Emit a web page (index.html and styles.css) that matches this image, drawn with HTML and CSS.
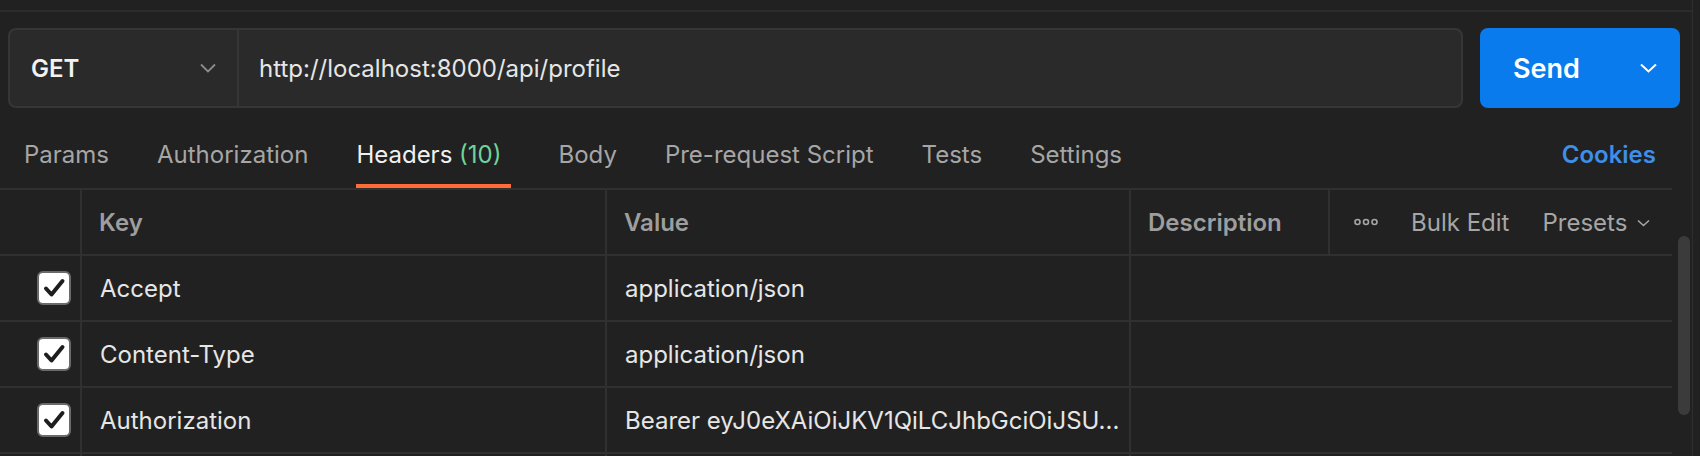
FILE: index.html
```html
<!DOCTYPE html>
<html lang="en">
<head>
<meta charset="utf-8">
<title>Request</title>
<link rel="stylesheet" href="styles.css">
</head>
<body>
<div class="app">
  <div class="main">
    <div class="topbar"></div>
    <div class="request">
      <div class="urlbox">
        <div class="method">
          <span class="method-name">GET</span>
          <svg class="chev" width="16" height="10" viewBox="0 0 16 10"><polyline points="1,1.5 8,8.5 15,1.5" fill="none" stroke="#8c8c8c" stroke-width="1.8"/></svg>
        </div>
        <div class="url">http://localhost:8000/api/profile</div>
      </div>
      <div class="send">
        <span class="send-label">Send</span>
        <svg class="chev" width="17" height="10" viewBox="0 0 17 10"><polyline points="1,1.5 8.5,8.5 16,1.5" fill="none" stroke="#ffffff" stroke-width="2"/></svg>
      </div>
    </div>
    <div class="tabs">
      <div class="tab">Params</div>
      <div class="tab">Authorization</div>
      <div class="tab active">Headers <span class="count">(10)</span></div>
      <div class="tab">Body</div>
      <div class="tab">Pre-request Script</div>
      <div class="tab">Tests</div>
      <div class="tab">Settings</div>
      <div class="cookies">Cookies</div>
    </div>
    <div class="tablewrap">
      <div class="table">
        <div class="row head">
          <div class="cell check"></div>
          <div class="cell">Key</div>
          <div class="cell">Value</div>
          <div class="cell">Description</div>
          <div class="cell actions">
            <svg class="dots" width="24" height="8" viewBox="0 0 24 8"><circle cx="3.5" cy="4" r="2.5" fill="none" stroke="#a6a6a6" stroke-width="1.6"/><circle cx="12" cy="4" r="2.5" fill="none" stroke="#a6a6a6" stroke-width="1.6"/><circle cx="20.5" cy="4" r="2.5" fill="none" stroke="#a6a6a6" stroke-width="1.6"/></svg>
            <span class="bulk">Bulk Edit</span>
            <span class="presets">Presets <svg class="pchev" width="13" height="8" viewBox="0 0 13 8"><polyline points="1,1.5 6.5,6.5 12,1.5" fill="none" stroke="#a6a6a6" stroke-width="1.6"/></svg></span>
          </div>
        </div>
        <div class="row">
          <div class="cell check"><span class="box"><svg width="30" height="30" viewBox="0 0 30 30"><polyline points="7,15.5 12.5,21.5 23.5,8" fill="none" stroke="#1e1e1e" stroke-width="4" stroke-linecap="round" stroke-linejoin="round"/></svg></span></div>
          <div class="cell">Accept</div>
          <div class="cell">application/json</div>
          <div class="cell wide"></div>
        </div>
        <div class="row">
          <div class="cell check"><span class="box"><svg width="30" height="30" viewBox="0 0 30 30"><polyline points="7,15.5 12.5,21.5 23.5,8" fill="none" stroke="#1e1e1e" stroke-width="4" stroke-linecap="round" stroke-linejoin="round"/></svg></span></div>
          <div class="cell">Content-Type</div>
          <div class="cell">application/json</div>
          <div class="cell wide"></div>
        </div>
        <div class="row">
          <div class="cell check"><span class="box"><svg width="30" height="30" viewBox="0 0 30 30"><polyline points="7,15.5 12.5,21.5 23.5,8" fill="none" stroke="#1e1e1e" stroke-width="4" stroke-linecap="round" stroke-linejoin="round"/></svg></span></div>
          <div class="cell">Authorization</div>
          <div class="cell">Bearer eyJ0eXAiOiJKV1QiLCJhbGciOiJSU...</div>
          <div class="cell wide"></div>
        </div>
        <div class="row">
          <div class="cell check"></div>
          <div class="cell"></div>
          <div class="cell"></div>
          <div class="cell wide"></div>
        </div>
      </div>
      <div class="gutter"><div class="thumb"></div></div>
    </div>
  </div>
  <div class="edge"></div>
</div>
</body>
</html>
```
FILE: styles.css
```css
html, body {
  margin: 0;
  padding: 0;
  background: #212121;
  height: 456px;
  overflow: hidden;
}
body {
  font-family: Inter, "Noto Sans", "Liberation Sans", sans-serif;
  color: #e6e6e6;
}
.app {
  display: flex;
  width: 1700px;
  height: 456px;
  overflow: hidden;
}
.main {
  width: 1692px;
  flex-shrink: 0;
  display: flex;
  flex-direction: column;
}
.main > * {
  flex-shrink: 0;
}
.edge {
  width: 1px;
  flex-shrink: 0;
  background: #2e2e2e;
}
.topbar {
  height: 10px;
  border-bottom: 2px solid #2c2c2c;
}
.request {
  display: flex;
  gap: 17px;
  padding: 16px 12px 0 8px;
}
.urlbox {
  flex: 1;
  height: 80px;
  box-sizing: border-box;
  display: flex;
  background: #2a2a2a;
  border: 2px solid #363636;
  border-radius: 8px;
}
.method {
  width: 229px;
  box-sizing: border-box;
  display: flex;
  align-items: center;
  justify-content: space-between;
  padding: 0 21px 0 21px;
  border-right: 2px solid #363636;
}
.method-name {
  font-size: 24px;
  font-weight: 600;
  color: #f2f2f2;
}
.url {
  display: flex;
  align-items: center;
  padding-left: 20px;
  font-size: 24px;
  color: #e6e6e6;
}
.send {
  width: 200px;
  height: 80px;
  box-sizing: border-box;
  background: #097bed;
  border-radius: 8px;
  display: flex;
  align-items: center;
  justify-content: space-between;
  padding: 0 23px 0 33px;
}
.send-label {
  font-size: 27px;
  font-weight: 600;
  color: #ffffff;
}
.tabs {
  display: flex;
  align-items: flex-start;
  gap: 48px;
  padding: 0 36px 0 24px;
  height: 80px;
  box-sizing: border-box;
}
.tab {
  font-size: 24px;
  line-height: 30px;
  color: #a6a6a6;
  padding: 32px 0 14px 0;
  border-bottom: 4px solid transparent;
  white-space: nowrap;
}
.tab.active {
  color: #f0f0f0;
  border-bottom-color: #ff6c37;
  padding-right: 9px;
}
.count {
  color: #6fd39c;
}
.cookies {
  margin-left: auto;
  font-size: 24px;
  line-height: 30px;
  font-weight: 600;
  color: #3d8fe8;
  padding-top: 32px;
}
.tablewrap {
  display: flex;
}
.table {
  width: 1672px;
  flex-shrink: 0;
  border-top: 2px solid #303030;
}
.gutter {
  width: 20px;
  flex-shrink: 0;
  padding: 48px 0 0 6px;
  box-sizing: border-box;
}
.thumb {
  width: 12px;
  height: 179px;
  border-radius: 6px;
  background: #3b3b3b;
}
.row {
  display: grid;
  grid-template-columns: 82px 525px 524px 199px 1fr;
  height: 66px;
  box-sizing: border-box;
  border-bottom: 2px solid #303030;
}
.cell {
  box-sizing: border-box;
  border-right: 2px solid #303030;
  display: flex;
  align-items: center;
  padding-left: 18px;
  font-size: 24px;
  color: #e6e6e6;
  white-space: nowrap;
  overflow: hidden;
}
.cell.wide {
  grid-column: span 2;
  border-right: none;
}
.head .cell {
  font-weight: 600;
  color: #9e9e9e;
  padding-left: 17px;
}
.cell.check {
  justify-content: flex-end;
  padding: 0 9px 0 0;
}
.box {
  width: 34px;
  height: 34px;
  box-sizing: border-box;
  border: 2px solid #6a6a6a;
  border-radius: 6px;
  background: #ffffff;
  display: flex;
  align-items: center;
  justify-content: center;
}
.head .cell.actions {
  border-right: none;
  padding-left: 24px;
  font-weight: 400;
  color: #a6a6a6;
  gap: 33px;
}
.presets {
  display: flex;
  align-items: center;
  gap: 10px;
}
.pchev {
  margin-top: 2px;
}
```
